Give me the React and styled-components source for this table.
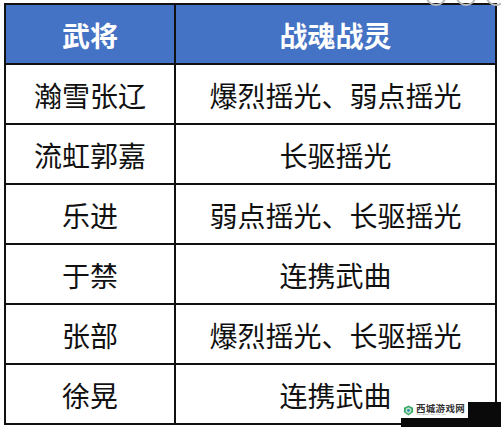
import React from "react";
import styled, { createGlobalStyle } from "styled-components";

const Global = createGlobalStyle`
  html, body { margin: 0; padding: 0; background: #ffffff; }
  body { width: 501px; height: 427px; overflow: hidden; position: relative; }
`;

const Page = styled.div`
  position: relative;
  width: 501px;
  height: 427px;
  padding: 3px 0 0 4px;
  box-sizing: border-box;
  font-family: "Noto Sans CJK SC", "Noto Sans", sans-serif;
`;

const Table = styled.div`
  width: 493px;
  border: 2px solid #111;
  box-sizing: border-box;
  display: flex;
  flex-direction: column;
`;

const Row = styled.div`
  display: grid;
  grid-template-columns: 168px 2px 1fr;
  height: 58px;
  border-bottom: ${(p) => (p.$last ? "none" : "2px solid #111")};
  background: ${(p) => (p.$head ? "#4472c4" : "#fff")};
`;

const Divider = styled.div`
  background: #111;
`;

const Cell = styled.div`
  display: flex;
  align-items: center;
  justify-content: center;
  font-size: 28px;
  line-height: 1;
  letter-spacing: 0;
  color: ${(p) => (p.$head ? "#ffffff" : "#111")};
  font-weight: ${(p) => (p.$head ? 700 : 400)};
  padding-top: 1px;
`;

const Dots = styled.div`
  position: absolute;
  top: -12px;
  left: 426px;
  display: flex;
  gap: 10px;
`;

const Dot = styled.div`
  width: 16px;
  height: 14px;
  border: 2px solid #b8b8b8;
  border-radius: 50%;
`;

const Mark = styled.div`
  position: absolute;
  left: 401px;
  top: 402px;
  width: 100px;
  height: 25px;
  background: #0a0a0a;
`;

const MarkBox = styled.div`
  width: 67px;
  height: 16px;
  background: #fff;
  display: flex;
  align-items: center;
  gap: 2px;
  padding-left: 2px;
  box-sizing: border-box;
`;

const MarkText = styled.div`
  display: flex;
  flex-direction: column;
  line-height: 1;
`;

const MarkName = styled.span`
  font-family: "Noto Sans CJK SC", sans-serif;
  font-size: 9.5px;
  font-weight: 700;
  color: #333;
  letter-spacing: 0.3px;
`;

const MarkSub = styled.span`
  font-family: "Liberation Sans", sans-serif;
  font-size: 2.5px;
  color: #777;
  letter-spacing: 0.2px;
  margin-top: 1px;
  white-space: nowrap;
`;

const rows = [
  ["瀚雪张辽", "爆烈摇光、弱点摇光"],
  ["流虹郭嘉", "长驱摇光"],
  ["乐进", "弱点摇光、长驱摇光"],
  ["于禁", "连携武曲"],
  ["张部", "爆烈摇光、长驱摇光"],
  ["徐晃", "连携武曲"],
];

export default function App() {
  return (
    <Page>
      <Global />
      <Dots>
        <Dot />
        <Dot />
        <Dot />
      </Dots>
      <Table>
        <Row $head>
          <Cell $head>武将</Cell>
          <Divider />
          <Cell $head>战魂战灵</Cell>
        </Row>
        {rows.map((r, i) => (
          <Row key={i} $last={i === rows.length - 1}>
            <Cell>{r[0]}</Cell>
            <Divider />
            <Cell>{r[1]}</Cell>
          </Row>
        ))}
      </Table>
      <Mark>
        <MarkBox>
          <svg width="11" height="11" viewBox="0 0 12 12">
            <path d="M6 0.5 L11 3 L11 8 L6 11.5 L1 8 L1 3 Z" fill="#3aa86b" />
            <path d="M6 2.5 L9 4 L9 7.5 L6 9.5 L3 7.5 L3 4 Z" fill="#bfe6c6" />
            <circle cx="6" cy="6" r="1.6" fill="#2e8fb8" />
          </svg>
          <MarkText>
            <MarkName>西城游戏网</MarkName>
            <MarkSub>XICHENGYOUXIWANG</MarkSub>
          </MarkText>
        </MarkBox>
      </Mark>
    </Page>
  );
}
